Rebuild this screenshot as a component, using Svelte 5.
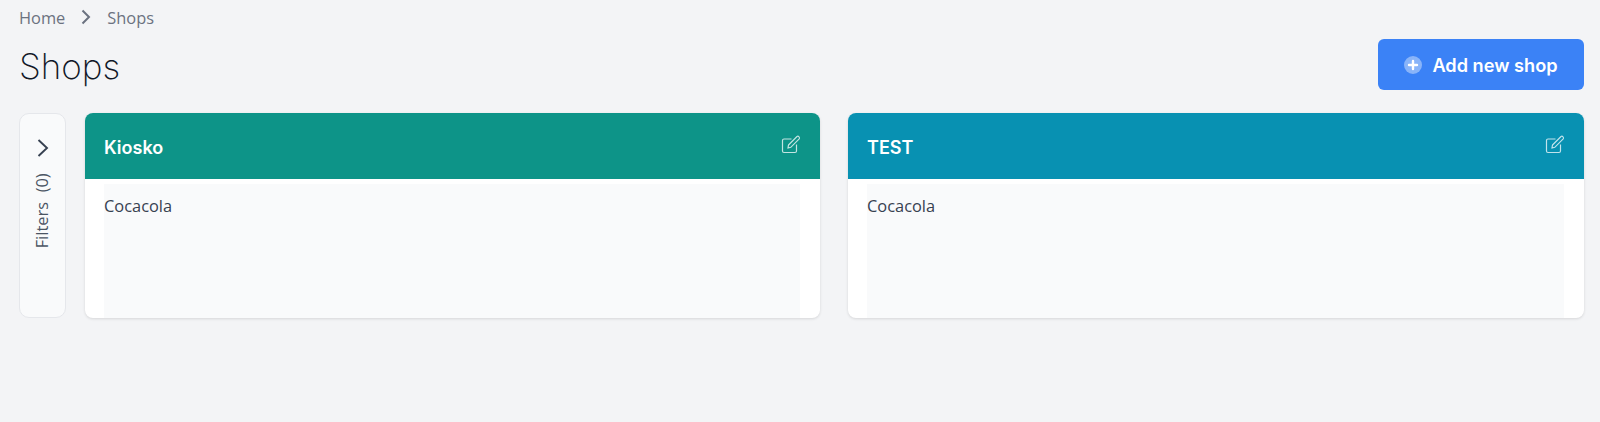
<script>
	const shops = [
		{ name: "Kiosko", color: "#0d9488", brand: "Cocacola" },
		{ name: "TEST", color: "#0891b2", brand: "Cocacola" }
	];
</script>

<div class="page">
	<nav class="breadcrumb">
		<span>Home</span>
		<svg width="20" height="20" viewBox="0 0 20 20" fill="none" stroke="#6b7280" stroke-width="2">
			<path d="M6.5 3.5 L13 10 L6.5 16.5" />
		</svg>
		<span>Shops</span>
	</nav>

	<div class="title_row">
		<h1>Shops</h1>
		<button class="add_button">
			<span class="plus">
				<svg width="18" height="18" viewBox="0 0 18 18">
					<circle cx="9" cy="9" r="9" fill="#fff" fill-opacity="0.4" />
					<path d="M9 5 V13 M5 9 H13" stroke="#fff" stroke-width="2.4" stroke-linecap="round" />
				</svg>
			</span>
			Add new shop
		</button>
	</div>

	<div class="content">
		<aside class="filters">
			<svg width="12" height="18" viewBox="0 0 12 18" fill="none" stroke="#374151" stroke-width="1.9">
				<path d="M1.5 1 L10 9 L1.5 17" />
			</svg>
			<div class="filters_label"><span>Filters</span><span>(0)</span></div>
		</aside>

		<div class="cards">
			{#each shops as shop}
				<section class="card">
					<header style="background: {shop.color}">
						<h2>{shop.name}</h2>
						<svg class="edit" width="20" height="20" viewBox="0 0 20 20" fill="none" stroke="#fff" stroke-opacity="0.75" stroke-width="1.2">
							<path d="M10.5 4 H3 Q1.5 4 1.5 5.5 V16 Q1.5 17.5 3 17.5 H14 Q15.5 17.5 15.5 16 V9.5" />
							<path d="M7.5 10 L16 1.5 Q17 0.8 18 1.8 Q19 2.8 18.2 3.8 L9.8 12.3 L7 13 Z" />
						</svg>
					</header>
					<div class="body">
						<div class="inner">{shop.brand}</div>
					</div>
				</section>
			{/each}
		</div>
	</div>
</div>

<style>
	:global(body) {
		background: #f3f4f6;
		font-family: "Open Sans", sans-serif;
	}

	.page {
		height: 422px;
		box-sizing: border-box;
		padding: 7px 16px 0 19px;
	}

	.breadcrumb {
		display: flex;
		align-items: center;
		gap: 11px;
		height: 20px;
		font-size: 16.4px;
		color: #6b7280;
	}

	.title_row {
		display: flex;
		justify-content: space-between;
		align-items: center;
		margin-top: 12px;
		height: 51px;
	}

	h1 {
		margin: 2px 0 0;
		font-family: "Inter", sans-serif;
		font-weight: 200;
		font-size: 35px;
		color: #111827;
	}

	.add_button {
		display: flex;
		align-items: center;
		justify-content: center;
		gap: 10px;
		width: 206px;
		height: 51px;
		border: 0;
		border-radius: 6px;
		background: #3b82f6;
		color: #fff;
		font-family: "Inter", sans-serif;
		font-weight: 600;
		font-size: 18.2px;
	}

	.plus { display: flex; }

	.content {
		display: flex;
		gap: 19px;
		margin-top: 23px;
	}

	.filters {
		box-sizing: border-box;
		width: 47px;
		height: 205px;
		flex: none;
		display: flex;
		flex-direction: column;
		align-items: center;
		padding-top: 25px;
		background: #f9fafb;
		border: 1px solid #e5e7eb;
		border-radius: 10px;
	}

	.filters_label {
		writing-mode: vertical-rl;
		transform: rotate(180deg);
		display: flex;
		gap: 10px;
		margin: 16px 2px 0 0;
		font-size: 16.4px;
		color: #4b5563;
	}

	.cards {
		flex: 1;
		display: grid;
		grid-template-columns: 735px 1fr;
		gap: 28px;
	}

	.card {
		height: 205px;
		background: #fff;
		border-radius: 8px;
		overflow: hidden;
		box-shadow: 0 1px 3px rgba(0, 0, 0, 0.12);
		display: flex;
		flex-direction: column;
	}

	header {
		height: 66px;
		flex: none;
		box-sizing: border-box;
		padding: 0 20px 0 19px;
		display: flex;
		justify-content: space-between;
		align-items: center;
		color: #fff;
	}

	h2 {
		margin: 2px 0 0;
		font-family: "Inter", sans-serif;
		font-size: 18px;
		font-weight: 600;
	}

	.edit {
		margin: 0 -1px 3px 0;
	}

	.body {
		flex: 1;
		padding: 5px 20px 0 19px;
		display: flex;
		min-height: 0;
	}

	.inner {
		flex: 1;
		background: #f9fafb;
		padding-top: 10px;
		font-size: 16.4px;
		color: #374151;
	}
</style>
